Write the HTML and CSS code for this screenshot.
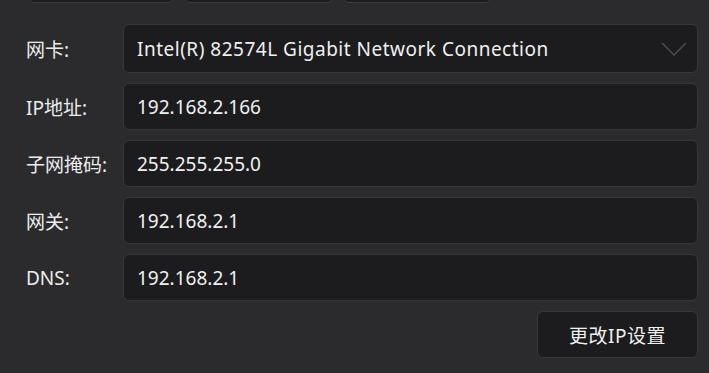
FILE: index.html
```html
<!DOCTYPE html>
<html lang="zh-CN">
<head>
<meta charset="utf-8">
<title>IP设置</title>
<link rel="stylesheet" href="styles.css">
</head>
<body>
<div class="page">
  <div class="top-row">
    <div class="top-btn top-btn-a"></div>
    <div class="top-btn top-btn-b"></div>
    <div class="top-btn top-btn-c"></div>
  </div>
  <div class="form">
    <div class="row row-combo">
      <label class="label">网卡:</label>
      <div class="field combo">
        <span class="value value-wide">Intel(R) 82574L Gigabit Network Connection</span>
        <svg class="chevron" width="26" height="14" viewBox="0 0 26 14"><path d="M1 1 L13 13 L25 1" fill="none" stroke="#4a4a4e" stroke-width="1.6"/></svg>
      </div>
    </div>
    <div class="row">
      <label class="label">IP地址:</label>
      <div class="field"><span class="value">192.168.2.166</span></div>
    </div>
    <div class="row">
      <label class="label">子网掩码:</label>
      <div class="field"><span class="value">255.255.255.0</span></div>
    </div>
    <div class="row">
      <label class="label">网关:</label>
      <div class="field"><span class="value">192.168.2.1</span></div>
    </div>
    <div class="row">
      <label class="label">DNS:</label>
      <div class="field"><span class="value">192.168.2.1</span></div>
    </div>
    <div class="actions">
      <button class="btn">更改IP设置</button>
    </div>
  </div>
</div>
</body>
</html>
```

FILE: styles.css
```css
html, body {
  margin: 0;
  padding: 0;
  background: #2b2b2d;
  overflow: hidden;
}
body {
  font-family: "Noto Sans", "Noto Sans CJK SC", sans-serif;
  font-size: 19px;
  color: #e6e6e6;
  width: 709px;
  height: 373px;
}
.page {
  padding: 0 11px 0 25px;
}
.top-row {
  height: 3px;
  display: flex;
  align-items: flex-end;
  gap: 10px;
  padding-left: 3px;
}
.top-btn {
  height: 40px;
  box-sizing: border-box;
  background: #1c1c1e;
  border: 1px solid #3c3c3f;
  border-radius: 6px;
}
.top-btn-a { flex: 0 0 146px; }
.top-btn-b { flex: 0 0 149px; }
.top-btn-c { flex: 0 0 148px; }
.form {
  display: flex;
  flex-direction: column;
  gap: 10px;
  padding-top: 21px;
}
.row {
  display: flex;
  align-items: center;
  height: 47px;
}
.row-combo {
  height: 49px;
}
.label {
  flex: 0 0 98px;
  box-sizing: border-box;
  font-size: 19px;
  color: #ececec;
  padding-left: 1px;
}
.field {
  flex: 1;
  height: 100%;
  box-sizing: border-box;
  background: #1c1c1e;
  border: 1px solid #38383b;
  border-radius: 6px;
  display: flex;
  align-items: center;
  padding: 0 10px 0 13px;
}
.value {
  flex: 1;
  color: #f0f0f0;
}
.value-wide {
  letter-spacing: 0.5px;
}
.chevron {
  display: block;
}
.actions {
  display: flex;
  justify-content: flex-end;
}
.btn {
  width: 161px;
  height: 47px;
  box-sizing: border-box;
  background: #1c1c1e;
  border: 1px solid #38383b;
  border-radius: 6px;
  color: #f0f0f0;
  font-family: "Noto Sans", "Noto Sans CJK SC", sans-serif;
  font-size: 19px;
  letter-spacing: 0.5px;
  padding: 0;
}
```
